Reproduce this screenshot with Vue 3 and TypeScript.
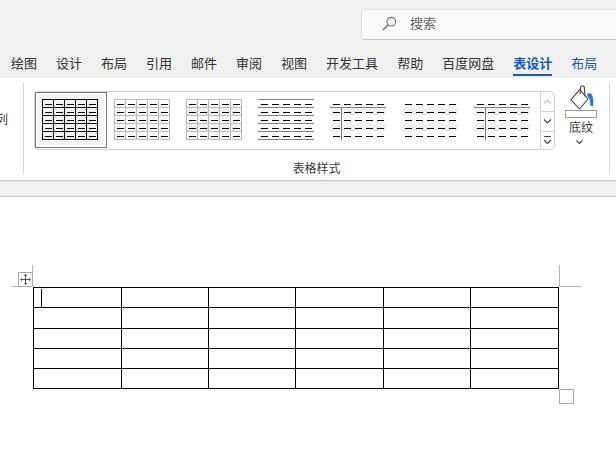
<script setup lang="ts">
const tabs = ['绘图', '设计', '布局', '引用', '邮件', '审阅', '视图', '开发工具', '帮助', '百度网盘']

interface Thumb { grid?: string; hlines?: string; shade?: boolean; header?: boolean; selected?: boolean }
const thumbs: Thumb[] = [
  { grid: '#000', selected: true },
  { grid: '#b9b9b9' },
  { grid: '#b9b9b9', shade: true },
  { hlines: '#808080' },
  { shade: true, header: true },
  { shade: true },
  { shade: true, header: true },
]
const cols = [0, 1, 2, 3, 4]
const rows = [0, 1, 2, 3, 4]
const edges = [0, 1, 2, 3, 4, 5]
const colWidths = [88, 87, 87, 88, 87, 88]
const rowsT = [0, 1, 2, 3, 4]
</script>

<template>
  <div class="app">
    <header class="topbar">
      <div class="search-row">
        <div class="search">
          <svg class="search-icon" width="15" height="15" viewBox="0 0 15 15" fill="none" stroke="#6e6e6e" stroke-width="1.1">
            <circle cx="9.3" cy="5.7" r="4.3" />
            <path d="M6.2 8.8 L1 14" stroke-width="1.4" />
          </svg>
          <span class="search-text">搜索</span>
        </div>
      </div>
      <nav class="tabs">
        <span v-for="t in tabs" :key="t + 'a'" class="tab">{{ t }}</span>
        <span class="tab active">表设计</span>
        <span class="tab blue">布局</span>
      </nav>
    </header>

    <section class="ribbon">
      <div class="prev-group"><span>列</span></div>
      <div class="styles-group">
        <div class="styles-row">
          <div class="gallery">
            <div v-for="(t, i) in thumbs" :key="i" class="item" :class="{ selected: t.selected }">
              <svg width="57" height="42" viewBox="0 0 57 42" shape-rendering="crispEdges">
                <template v-if="t.shade">
                  <rect v-for="r in [1, 3]" :key="'s' + r" x="0" :y="r * 8 + 1" width="56" height="7" fill="#f0f0f0" />
                </template>
                <template v-if="t.grid">
                  <line v-for="e in edges" :key="'h' + e" x1="0" x2="56" :y1="e * 8 + 0.5" :y2="e * 8 + 0.5" :stroke="t.grid" />
                  <line v-for="e in edges" :key="'v' + e" :x1="e * 11 + 0.5" :x2="e * 11 + 0.5" y1="0" y2="41" :stroke="t.grid" />
                </template>
                <template v-if="t.hlines">
                  <line v-for="e in edges" :key="'l' + e" x1="0" x2="56" :y1="e * 8 + 0.5" :y2="e * 8 + 0.5" :stroke="t.hlines" />
                </template>
                <template v-if="t.header">
                  <line x1="0" x2="56" y1="8.5" y2="8.5" stroke="#808080" />
                  <line x1="11.5" x2="11.5" y1="8" y2="41" stroke="#808080" />
                </template>
                <template v-for="r in rows" :key="'r' + r">
                  <rect v-for="c in cols" :key="'d' + c" :x="c * 11 + 3" :y="r * 8 + 5" width="7" height="1" fill="#000" />
                </template>
              </svg>
            </div>
            <div class="scroller">
              <div class="sbtn">
                <svg width="9" height="5" viewBox="0 0 9 5" fill="none" stroke="#c4c4c4" stroke-width="1.2"><path d="M1 4.5 L4.5 1 L8 4.5" /></svg>
              </div>
              <div class="sbtn">
                <svg width="9" height="5" viewBox="0 0 9 5" fill="none" stroke="#444" stroke-width="1.2"><path d="M1 .5 L4.5 4 L8 .5" /></svg>
              </div>
              <div class="sbtn more">
                <svg width="9" height="9" viewBox="0 0 9 9" fill="none" stroke="#444" stroke-width="1.1"><path d="M1 .5 H8" /><path d="M1 4 L4.5 7.5 L8 4" stroke-width="1.2" /></svg>
              </div>
            </div>
          </div>
          <div class="shading">
            <svg class="bucket" width="32" height="25" viewBox="0 0 32 25" fill="none">
              <path d="M6 14.7 L14.7 4.7 L23 14 L14.5 24 Z" fill="#fff" stroke="#444" stroke-width="1.1" stroke-linejoin="round" />
              <path d="M15 9 L15.6 2 C16 .6 19 .6 19.3 2 L20 11.5" stroke="#444" stroke-width="1.1" />
              <path d="M22 9.5 C23 8 25.5 7.5 26.8 9.5 C28.4 12 28.8 17 28 21 L25.2 21 C25.6 17 25 13.5 22.5 11.5 Z" fill="#2b7cd3" />
            </svg>
            <div class="swatch"></div>
            <span class="shading-label">底纹</span>
            <svg class="chev" width="7" height="4" viewBox="0 0 7 4" fill="none" stroke="#444" stroke-width="1.1"><path d="M.5 .5 L3.5 3.5 L6.5 .5" /></svg>
          </div>
        </div>
        <div class="group-label">表格样式</div>
      </div>
    </section>

    <div class="band"></div>

    <main class="doc">
      <div class="table-wrap">
        <span class="crop crop-left"></span>
        <span class="crop crop-right"></span>
        <span class="move">
          <svg width="11" height="11" viewBox="0 0 11 11" fill="#555" stroke="none">
            <path d="M5 2 H6 V5 H9 V6 H6 V9 H5 V6 H2 V5 H5 Z" />
            <path d="M5.5 0 L7.2 2 H3.8 Z M5.5 11 L7.2 9 H3.8 Z M0 5.5 L2 3.8 V7.2 Z M11 5.5 L9 3.8 V7.2 Z" />
          </svg>
        </span>
        <table class="table">
          <colgroup>
            <col v-for="(w, i) in colWidths" :key="i" :style="{ width: w + 'px' }" />
          </colgroup>
          <tbody>
            <tr v-for="r in rowsT" :key="r">
              <td v-for="(w, c) in colWidths" :key="c"><span v-if="r === 0 && c === 0" class="caret"></span></td>
            </tr>
          </tbody>
        </table>
        <span class="resize"></span>
      </div>
    </main>
  </div>
</template>

<style scoped>
.app {
  width: 616px;
  height: 461px;
  overflow: hidden;
  background: #fff;
  font-family: "Noto Sans CJK SC", "Noto Sans", sans-serif;
  color: #3a3a3a;
  display: flex;
  flex-direction: column;
}
.topbar {
  height: 78px;
  background: #eff0f0;
  display: flex;
  flex-direction: column;
  flex: none;
}
.search-row {
  height: 50px;
  padding-top: 9px;
  padding-left: 361px;
  box-sizing: border-box;
}
.search {
  width: 300px;
  height: 31px;
  box-sizing: border-box;
  background: #fafafa;
  border: 1px solid #e2e2e2;
  border-bottom-color: #c4c4c4;
  border-radius: 4px;
  display: flex;
  align-items: center;
  padding-left: 20px;
  padding-bottom: 5px;
  gap: 13px;
  font-size: 13px;
  color: #666;
}
.search-icon { flex: none; margin-top: 3px; }
.tabs {
  display: flex;
  gap: 19px;
  padding-left: 11px;
  height: 28px;
  align-items: flex-start;
}
.tab {
  font-size: 13px;
  line-height: 26px;
  height: 24px;
  white-space: nowrap;
  color: #333;
  flex: none;
}
.tab.active {
  color: #185abd;
  font-weight: 700;
  border-bottom: 2px solid #185abd;
}
.tab.blue { color: #185abd; }
.ribbon {
  height: 102px;
  flex: none;
  background: #fff;
  display: flex;
  align-items: flex-start;
  padding-top: 5px;
  box-sizing: border-box;
  box-shadow: 0 1px 1px rgba(0, 0, 0, .16);
  position: relative;
}
.prev-group {
  width: 24px;
  height: 91px;
  box-sizing: border-box;
  border-right: 1px solid #d6d6d6;
  overflow: hidden;
  display: flex;
  font-size: 12px;
  padding-top: 27px;
}
.prev-group span {
  margin-left: -4px;
  line-height: 18px;
  height: 18px;
}
.styles-group {
  width: 586px;
  height: 91px;
  box-sizing: border-box;
  border-right: 1px solid #d6d6d6;
  padding-top: 3px;
  display: flex;
  flex-direction: column;
}
.styles-row {
  display: flex;
  align-items: flex-start;
  padding-left: 10px;
  height: 75px;
  flex: none;
}
.gallery {
  margin-top: 5px;
  width: 521px;
  height: 59px;
  box-sizing: border-box;
  border: 1px solid #d2d2d2;
  border-radius: 5px;
  display: flex;
  flex: none;
}
.item {
  width: 72px;
  height: 56px;
  box-sizing: border-box;
  padding: 7px 0 0 7px;
  flex: none;
}
.item svg { display: block; }
.item.selected {
  border: 1px solid #7a7a7a;
  padding: 6px 0 0 6px;
  background: #f4f4f4;
  box-shadow: inset 0 0 0 2px #fff;
}
.scroller {
  margin-left: 1px;
  flex: 1;
  border-left: 1px solid #d2d2d2;
  display: flex;
  flex-direction: column;
}
.sbtn {
  height: 19px;
  flex: none;
  display: flex;
  align-items: center;
  justify-content: center;
  border-bottom: 1px solid #d2d2d2;
}
.sbtn.more { border-bottom: 0; flex: 1; height: auto; }
.shading {
  margin-left: 10px;
  width: 32px;
  display: flex;
  flex-direction: column;
  align-items: center;
  flex: none;
  margin-top: -1px;
}
.bucket { flex: none; display: block; }
.swatch {
  width: 32px;
  height: 8px;
  box-sizing: border-box;
  border: 1px solid #9a9a9a;
  background: #fff;
  flex: none;
}
.shading-label {
  font-size: 12px;
  line-height: 18px;
  color: #3a3a3a;
}
.chev { margin-top: 4px; margin-left: -3px; }
.group-label {
  font-size: 12px;
  line-height: 13px;
  text-align: center;
  color: #3a3a3a;
  flex: none;
}
.band {
  height: 17px;
  flex: none;
  box-sizing: border-box;
  background: #eff0f0;
  border-bottom: 1px solid #cccccc;
}
.doc {
  flex: 1;
  background: #fff;
  padding: 90px 0 0 33px;
}
.table-wrap {
  position: relative;
  width: 526px;
}
.table {
  border-collapse: collapse;
  table-layout: fixed;
  width: 526px;
}
.table td {
  border: 1px solid #000;
  height: 19px;
  padding: 0;
  position: relative;
}
.table tr:nth-child(2) td { height: 20px; }
.caret {
  position: absolute;
  left: 7px;
  top: 1px;
  width: 1px;
  height: 18px;
  background: #000;
}
.crop { position: absolute; background: transparent; }
.crop-left {
  left: -21px;
  top: -22px;
  width: 21px;
  height: 22px;
  border-right: 1px solid #b4b4b4;
  border-bottom: 1px solid #b4b4b4;
  box-sizing: border-box;
}
.crop-right {
  left: 526px;
  top: -22px;
  width: 22px;
  height: 22px;
  border-left: 1px solid #b4b4b4;
  border-bottom: 1px solid #b4b4b4;
  box-sizing: border-box;
}
.move {
  position: absolute;
  left: -15px;
  top: -15px;
  width: 15px;
  height: 15px;
  box-sizing: border-box;
  border: 1px solid #aaa;
  background: #fff;
  display: flex;
  align-items: center;
  justify-content: center;
}
.resize {
  position: absolute;
  left: 526px;
  top: 102px;
  width: 15px;
  height: 15px;
  box-sizing: border-box;
  border: 1px solid #aaa;
  background: #fff;
}
</style>

<style>
html, body { margin: 0; background: #fff; }
</style>
